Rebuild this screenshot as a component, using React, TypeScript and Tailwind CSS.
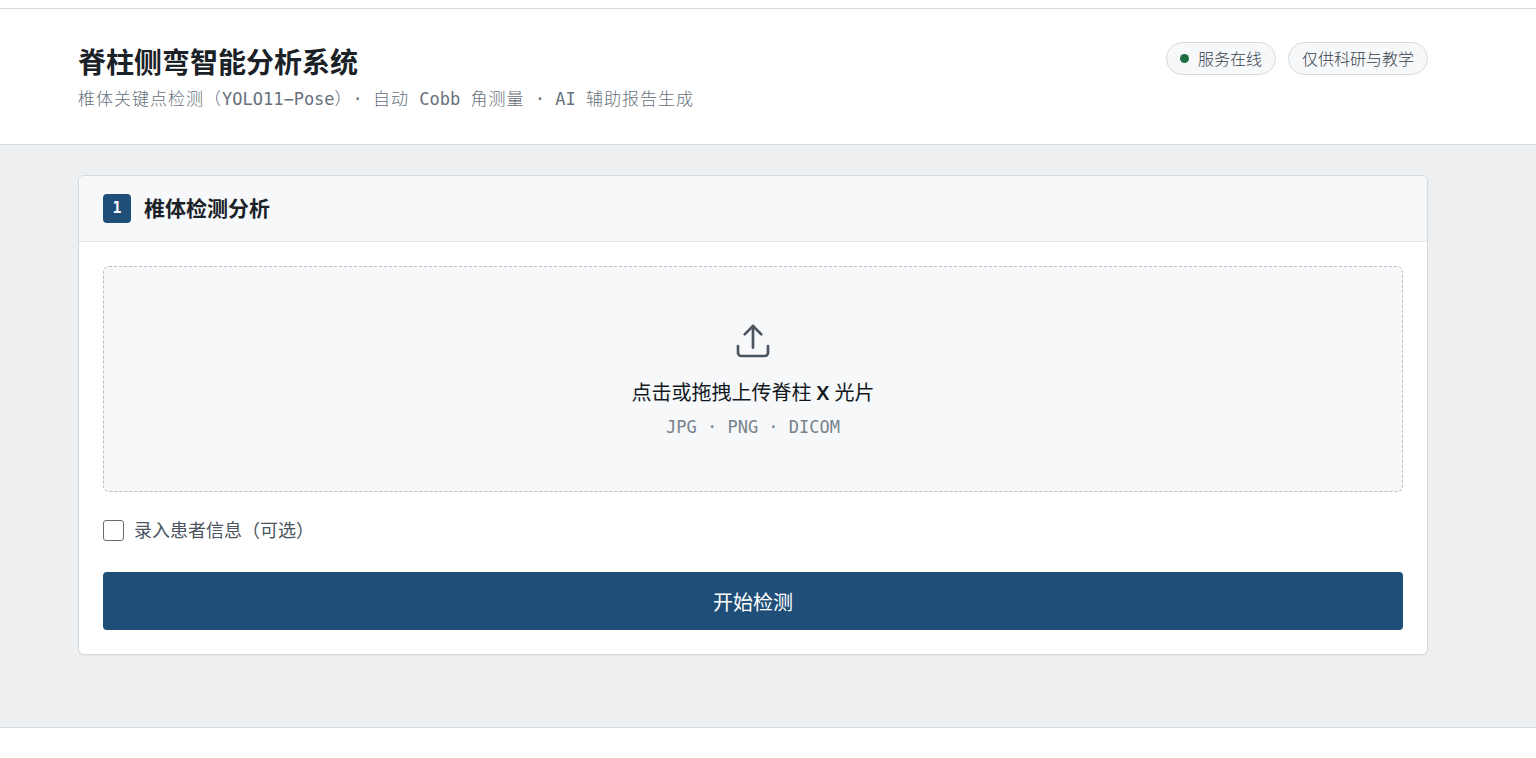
import { useState } from "react";

const SANS = "font-['Noto_Sans','Noto_Sans_CJK_SC',sans-serif]";
const MONO = "font-['DejaVu_Sans_Mono','Noto_Sans_CJK_SC',monospace]";
const SHELL = "pl-[78px] pr-[108px]";
const PILL = "flex items-center h-[33px] px-[13px] rounded-full border border-[#d5dade] bg-[#f6f8fa] text-base leading-7 font-light text-[#36414b]";

function UploadIcon() {
  return (
    <svg width="40" height="40" viewBox="0 0 24 24" fill="none" stroke="currentColor" strokeWidth="1.6" strokeLinecap="round" strokeLinejoin="round" aria-hidden="true">
      <path d="M12 16V3" />
      <path d="M7 8l5-5 5 5" />
      <path d="M3 15v4a2 2 0 0 0 2 2h14a2 2 0 0 0 2-2v-4" />
    </svg>
  );
}

function Header() {
  return (
    <header className={`${SHELL} flex items-start justify-between border-y border-[#d5d9dd] bg-white pt-[33px] pb-[31px]`}>
      <div>
        <h1 className="text-[28px] leading-10 font-bold text-[#1a2127]">脊柱侧弯智能分析系统</h1>
        <p className={`${MONO} mt-[3px] text-[17px] leading-7 font-light tracking-[1px] text-[#66717b] [text-spacing-trim:space-all]`}>
          椎体关键点检测（<span className="tracking-normal">YOLO11−Pose</span>）
          <span className="tracking-normal">· </span>自动
          <span className="tracking-normal"> Cobb </span>角测量
          <span className="tracking-normal"> · AI </span>辅助报告生成
        </p>
      </div>
      <div className="flex gap-3">
        <span className={`${PILL} gap-[9px]`}>
          <span className="w-[9px] h-[9px] rounded-full bg-[#1e6f42]" />
          服务在线
        </span>
        <span className={PILL}>仅供科研与教学</span>
      </div>
    </header>
  );
}

function DetectCard() {
  const [withPatient, setWithPatient] = useState(false);

  return (
    <section className="rounded-md border border-[#d5dade] bg-white shadow-xs overflow-hidden">
      <div className="flex items-center gap-[13px] h-[66px] px-6 border-b border-[#e2e6ea] bg-[#f6f8fa]">
        <span className={`${MONO} flex items-center justify-center w-7 h-[29px] rounded bg-[#1f4e78] text-[15px] font-bold text-white`}>1</span>
        <h2 className="text-[21px] font-bold text-[#1a2127]">椎体检测分析</h2>
      </div>
      <div className="p-6">
        <label className="flex flex-col items-center pt-[54px] pb-[50px] rounded-md border border-dashed border-[#b9c0c7] bg-[#f6f8fa] cursor-pointer">
          <input type="file" accept=".jpg,.png,.dcm" className="sr-only" />
          <span className="text-[#4a5560]"><UploadIcon /></span>
          <span className="mt-4 text-xl leading-8 text-[#12181d]">点击或拖拽上传脊柱 <span className="font-semibold">X</span> 光片</span>
          <span className={`${MONO} mt-1 text-[17px] leading-7 text-[#77828c]`}>JPG · PNG · DICOM</span>
        </label>

        <label className="flex items-center gap-[10px] mt-6 text-lg leading-7 text-[#4a5560] cursor-pointer">
          <input
            type="checkbox"
            checked={withPatient}
            onChange={(e) => setWithPatient(e.target.checked)}
            className="appearance-none w-[21px] h-[21px] rounded-[3px] border border-[#6b6b6b] bg-white checked:border-[#1f4e78] checked:bg-[#1f4e78]"
          />
          录入患者信息（可选）
        </label>

        <button className="w-full h-[58px] mt-7 pt-1 rounded bg-[#1f4e78] text-xl text-white">开始检测</button>
      </div>
    </section>
  );
}

export default function App() {
  return (
    <div lang="zh-CN" className={`${SANS} min-h-screen bg-white pt-2`}>
      <Header />
      <main className={`${SHELL} pt-[30px] pb-[72px] border-b border-[#d5d9dd] bg-[#edeff1]`}>
        <DetectCard />
      </main>
    </div>
  );
}
